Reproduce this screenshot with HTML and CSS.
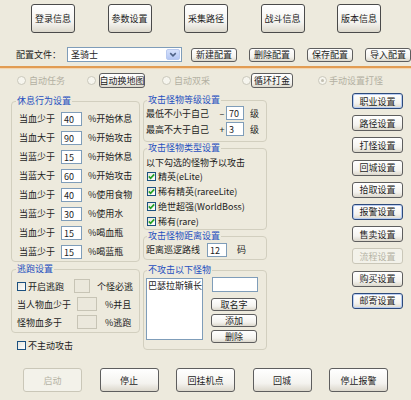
FILE: index.html
```html
<!DOCTYPE html>
<html lang="zh-CN">
<head>
<meta charset="utf-8">
<title>配置</title>
<link rel="stylesheet" href="styles.css">
</head>
<body>
<div class="app">
  <div class="tabs">
    <button class="btn tab">登录信息</button>
    <button class="btn tab">参数设置</button>
    <button class="btn tab">采集路径</button>
    <button class="btn tab">战斗信息</button>
    <button class="btn tab">版本信息</button>
  </div>

  <div class="config">
    <span class="cfg-label">配置文件：</span>
    <div class="combo">
      <span class="combo-text">圣骑士</span>
      <span class="combo-arrow"><svg width="13" height="11" viewBox="0 0 13 11"><path d="M3.5 4 L6.5 7 L9.5 4" fill="none" stroke="#4d6185" stroke-width="1.6"/></svg></span>
    </div>
    <div class="cfg-btns">
      <button class="btn cfg">新建配置</button>
      <button class="btn cfg">删除配置</button>
      <button class="btn cfg">保存配置</button>
      <button class="btn cfg">导入配置</button>
    </div>
  </div>

  <div class="sep"></div>

  <div class="modes">
    <span class="rb"></span><span class="dis-text m-t1">自动任务</span>
    <span class="rb m-r2"></span><button class="btn mode-btn w46">自动换地图</button>
    <span class="rb m-r3"></span><span class="dis-text m-t3">自动双采</span>
    <span class="rb m-r4"></span><button class="btn mode-btn w42">循环打金</button>
    <span class="rb on m-r5"></span><span class="dis-text m-t5">手动设置打怪</span>
  </div>

  <div class="main">
    <div class="col-left">
      <fieldset class="grp rest">
        <legend>休息行为设置</legend>
        <div class="rrow"><span class="rl">当血少于</span><span class="inp w21">40</span><span>%开始休息</span></div>
        <div class="rrow"><span class="rl">当血大于</span><span class="inp w21">90</span><span>%开始攻击</span></div>
        <div class="rrow"><span class="rl">当蓝少于</span><span class="inp w21">15</span><span>%开始休息</span></div>
        <div class="rrow"><span class="rl">当蓝大于</span><span class="inp w21">60</span><span>%开始攻击</span></div>
        <div class="rrow"><span class="rl">当血少于</span><span class="inp w21">40</span><span>%使用食物</span></div>
        <div class="rrow"><span class="rl">当蓝少于</span><span class="inp w21">30</span><span>%使用水</span></div>
        <div class="rrow"><span class="rl">当血少于</span><span class="inp w21">15</span><span>%喝血瓶</span></div>
        <div class="rrow"><span class="rl">当蓝少于</span><span class="inp w21">15</span><span>%喝蓝瓶</span></div>
      </fieldset>

      <fieldset class="grp flee">
        <legend>逃跑设置</legend>
        <div class="frow">
          <span class="cb"></span><span class="cb-text">开启逃跑</span>
          <span class="inp dis w16 m-f1"></span><span class="m-f2">个怪必逃</span>
        </div>
        <div class="frow">
          <span class="fl">当人物血少于</span><span class="inp dis w20"></span><span class="m-f3">%并且</span>
        </div>
        <div class="frow">
          <span class="fl">怪物血多于</span><span class="inp dis w20"></span><span class="m-f3">%逃跑</span>
        </div>
      </fieldset>

      <div class="noatk"><span class="cb"></span><span class="cb-text">不主动攻击</span></div>
    </div>

    <div class="col-mid">
      <fieldset class="grp mid lvl">
        <legend>攻击怪物等级设置</legend>
        <div class="lrow"><span class="ll">最低不小于自己</span><span class="sign">–</span><span class="inp w18">70</span><span class="m-lv">级</span></div>
        <div class="lrow"><span class="ll">最高不大于自己</span><span class="sign">+</span><span class="inp w18">3</span><span class="m-lv">级</span></div>
      </fieldset>

      <fieldset class="grp mid type">
        <legend>攻击怪物类型设置</legend>
        <div class="trow-text">以下勾选的怪物予以攻击</div>
        <div class="trow"><span class="cb on"><svg width="9" height="9" viewBox="0 0 9 9"><path d="M1.8 4.4 L3.6 6.3 L7.2 2.4" fill="none" stroke="#21a121" stroke-width="1.6"/></svg></span><span class="cb-text">精英(eLite)</span></div>
        <div class="trow"><span class="cb on"><svg width="9" height="9" viewBox="0 0 9 9"><path d="M1.8 4.4 L3.6 6.3 L7.2 2.4" fill="none" stroke="#21a121" stroke-width="1.6"/></svg></span><span class="cb-text">稀有精英(rareeLite)</span></div>
        <div class="trow"><span class="cb on"><svg width="9" height="9" viewBox="0 0 9 9"><path d="M1.8 4.4 L3.6 6.3 L7.2 2.4" fill="none" stroke="#21a121" stroke-width="1.6"/></svg></span><span class="cb-text">绝世超强(WorldBoss)</span></div>
        <div class="trow"><span class="cb on"><svg width="9" height="9" viewBox="0 0 9 9"><path d="M1.8 4.4 L3.6 6.3 L7.2 2.4" fill="none" stroke="#21a121" stroke-width="1.6"/></svg></span><span class="cb-text">稀有(rare)</span></div>
      </fieldset>

      <fieldset class="grp mid dist">
        <legend>攻击怪物距离设置</legend>
        <div class="drow"><span class="dl">距离巡逻路线</span><span class="inp w20">12</span><span class="m-d">码</span></div>
      </fieldset>

      <fieldset class="grp mid ex">
        <legend>不攻击以下怪物</legend>
        <div class="ex-body">
          <div class="listbox"><div class="li">巴瑟拉斯镇长</div></div>
          <div class="ex-side">
            <span class="inp ex-inp"></span>
            <button class="btn ex-btn first">取名字</button>
            <button class="btn ex-btn">添加</button>
            <button class="btn ex-btn">删除</button>
          </div>
        </div>
      </fieldset>
    </div>

    <div class="col-right">
      <button class="btn side hl">职业设置</button>
      <button class="btn side">路径设置</button>
      <button class="btn side">打怪设置</button>
      <button class="btn side">回城设置</button>
      <button class="btn side">拾取设置</button>
      <button class="btn side hl">报警设置</button>
      <button class="btn side">售卖设置</button>
      <button class="btn side disabled">流程设置</button>
      <button class="btn side">购买设置</button>
      <button class="btn side hl">邮寄设置</button>
    </div>
  </div>

  <div class="bottom">
    <button class="btn big disabled">启动</button>
    <button class="btn big">停止</button>
    <button class="btn big">回挂机点</button>
    <button class="btn big">回城</button>
    <button class="btn big">停止报警</button>
  </div>
</div>
</body>
</html>
```

FILE: styles.css
```css
* { box-sizing: border-box; }
html, body { margin: 0; padding: 0; }
body {
  width: 411px;
  height: 400px;
  overflow: hidden;
  background: #edeadd;
  font-family: "Noto Sans CJK SC", "Liberation Sans", sans-serif;
  font-size: 9px;
  color: #1c1c1c;
}
.app { width: 411px; height: 400px; }

/* buttons */
.btn {
  font: inherit;
  color: #1c1c1c;
  border: 1px solid #5e5e5e;
  border-radius: 3px;
  background: linear-gradient(#ffffff, #f4f3ef 65%, #dcd8cc);
  padding: 0;
  margin: 0;
  line-height: 1;
  display: flex;
  align-items: center;
  justify-content: center;
  white-space: nowrap;
}
.btn.hl {
  border-color: #2d4a7a;
  box-shadow: inset 0 0 0 1px #b9cdf2;
}
.btn.disabled {
  color: #b5b2a4;
  border-color: #cac7b8;
  background: #f3f2ea;
}

/* tabs */
.tabs {
  display: flex;
  gap: 32.5px;
  padding: 4px 0 0 31px;
  height: 33px;
}
.tab { width: 44px; height: 29px; border-color: #4a4a4a; }

/* config row */
.config {
  display: flex;
  align-items: center;
  height: 15px;
  margin-top: 14px;
  padding-left: 16px;
}
.cfg-label { width: 51px; }
.combo {
  width: 115px;
  height: 15px;
  background: #fff;
  border: 1px solid #7f9db9;
  display: flex;
  align-items: center;
  justify-content: space-between;
  padding: 0 1px 0 3px;
}
.combo-arrow {
  width: 14px;
  height: 11px;
  border-radius: 2px;
  background: linear-gradient(#d6e1fb, #b4c7f4);
  border: 1px solid #b8c9ef;
  display: flex;
  align-items: center;
  justify-content: center;
}
.combo-arrow svg { display: block; }
.cfg-btns {
  display: flex;
  gap: 12px;
  margin-left: 9px;
}
.cfg { width: 46px; height: 14px; }

/* separator */
.sep {
  margin-top: 4px;
  height: 2px;
  background: #e29c52;
  box-shadow: 0 1px 1px #f3d3ab;
}

/* mode row */
.modes {
  display: flex;
  align-items: center;
  height: 16px;
  margin-top: 4px;
  padding-left: 17px;
}
.rb {
  width: 9px;
  height: 9px;
  border-radius: 50%;
  border: 1px solid #cac8bb;
  background: #f6f5ee;
  flex: none;
  display: flex;
  align-items: center;
  justify-content: center;
}
.rb.on::after {
  content: "";
  width: 3px;
  height: 3px;
  border-radius: 50%;
  background: #c2bfb0;
}
.dis-text { color: #b3b0a2; }
.m-t1 { margin-left: 3px; }
.m-r2 { margin-left: 22px; }
.m-r3 { margin-left: 17px; }
.m-t3 { margin-left: 3px; }
.m-r4 { margin-left: 32px; }
.m-r5 { margin-left: 25px; }
.m-t5 { margin-left: 2px; }
.mode-btn { height: 15px; margin-left: 3px; }
.m-r4 + .mode-btn { margin-left: 0; }
.w46 { width: 46px; }
.w42 { width: 42px; }

/* main */
.main {
  display: flex;
  height: 275px;
  margin-top: 5px;
  padding-left: 11px;
}
.col-left { width: 129px; padding-top: 3px; }
.col-mid { width: 124px; margin-left: 3px; padding-top: 2px; }
.col-right {
  width: 51px;
  margin-left: 85px;
  display: flex;
  flex-direction: column;
  gap: 6.2px;
}
.side { width: 51px; height: 16px; }

/* group boxes */
.grp {
  margin: 0;
  min-width: 0;
  border: 1px solid #d2cfbf;
  border-radius: 4px;
}
.grp legend {
  padding: 0 1px;
  line-height: 10px;
  color: #1f4fbf;
}
.rest { padding: 3px 2px 0 7px; }
.rest legend { margin-left: -3px; }
.flee { margin-top: 2px; padding: 3px 2px 1px 5px; }
.flee legend { margin-left: -1px; }
.mid { padding-left: 2px; padding-right: 2px; }
.mid legend { margin-left: 1px; }
.lvl { padding-top: 0; padding-bottom: 4px; }
.type { margin-top: 1px; padding-top: 2px; padding-bottom: 0; }
.dist { margin-top: 1px; padding-top: 0; padding-bottom: 1px; }
.ex { margin-top: 5px; padding-top: 2px; padding-bottom: 6px; }

/* inputs */
.inp {
  display: flex;
  align-items: center;
  height: 14px;
  background: #fff;
  border: 1px solid #7f9db9;
  padding: 1px 0 0 2px;
  flex: none;
}
.inp.dis { background: #ebe8dc; border-color: #c7c4b5; }
.w16 { width: 16px; }
.w18 { width: 18px; }
.w20 { width: 20px; }
.w21 { width: 21px; }

/* rest rows */
.rrow { display: flex; align-items: center; height: 19px; }
.rl { width: 42px; }
.rrow .inp { margin-right: 6px; }

/* flee rows */
.frow { display: flex; align-items: center; height: 18px; }
.fl { width: 60px; }
.m-f1 { margin-left: 10px; }
.m-f2 { margin-left: 7px; }
.m-f3 { margin-left: 8px; }

/* checkboxes */
.cb {
  width: 9px;
  height: 9px;
  border: 1px solid #1c5180;
  background: linear-gradient(135deg, #e6e6de, #ffffff);
  flex: none;
  display: flex;
  align-items: center;
  justify-content: center;
}
.cb svg { display: block; flex: none; margin: -1px; }
.cb-text { margin-left: 2px; }
.noatk {
  display: flex;
  align-items: center;
  height: 12px;
  margin-top: 6px;
  padding-left: 6px;
}

/* level rows */
.lrow { display: flex; align-items: center; height: 16px; }
.ll { width: 72px; }
.sign { width: 8px; text-align: center; }
.m-lv { margin-left: 6px; }

/* type rows */
.trow-text { height: 14px; display: flex; align-items: center; }
.trow { display: flex; align-items: center; height: 15px; padding-left: 1px; }

/* distance */
.drow { display: flex; align-items: center; height: 17px; }
.dl { width: 61px; }
.m-d { margin-left: 10px; }

/* exclude */
.ex-body { display: flex; height: 66px; }
.listbox {
  width: 57px;
  height: 62px;
  margin-top: 1px;
  background: #fff;
  border: 1px solid #7f9db9;
  padding: 1px 0 0 1px;
  overflow: hidden;
}
.li { white-space: nowrap; line-height: 11px; }
.ex-side {
  display: flex;
  flex-direction: column;
  margin-left: 8px;
  width: 47px;
}
.ex-inp { width: 46px; height: 15px; margin-left: 1px; }
.ex-btn { width: 46px; height: 13px; margin-top: 3px; }
.ex-btn.first { margin-top: 6px; }

/* bottom */
.bottom {
  display: flex;
  gap: 17.5px;
  padding-left: 23px;
}
.big { width: 59px; height: 24px; }
```
